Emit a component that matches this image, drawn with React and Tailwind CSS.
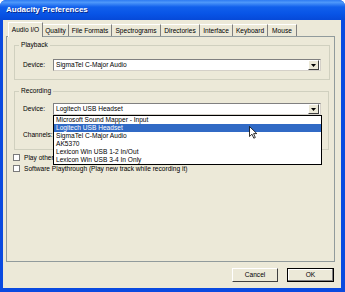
import React from "react";

const tabs = [
  { label: "Quality", w: "w-[26px]" },
  { label: "File Formats", w: "w-[43px]" },
  { label: "Spectrograms", w: "w-[49px]" },
  { label: "Directories", w: "w-[39px]" },
  { label: "Interface", w: "w-[33px]" },
  { label: "Keyboard", w: "w-[35px]" },
  { label: "Mouse", w: "w-[29px]" },
];

const recordingDevices = [
  "Microsoft Sound Mapper - Input",
  "Logitech USB Headset",
  "SigmaTel C-Major Audio",
  "AK5370",
  "Lexicon Win USB 1-2 In/Out",
  "Lexicon Win USB 3-4 In Only",
];

const ComboArrow = () => (
  <div className="flex h-[10px] w-[11px] shrink-0 items-center justify-center border border-t-white border-l-white border-r-[#404040] border-b-[#404040] bg-[#ECE9D8]">
    <svg width="5" height="3" viewBox="0 0 5 3">
      <path d="M0 0 H5 L2.5 3 Z" fill="#000" />
    </svg>
  </div>
);

const Combo = ({ value, children }) => (
  <div className="relative w-[268px]">
    <div className="flex h-[12px] items-center border border-t-[#808080] border-l-[#808080] border-r-[#d4d0c8] border-b-[#d4d0c8] bg-white pr-[1px]">
      <span className="flex-1 truncate pl-[2px] leading-[10px]">{value}</span>
      <ComboArrow />
    </div>
    {children}
  </div>
);

const Checkbox = ({ label }) => (
  <div className="flex h-[11px] items-center gap-[4px]">
    <div className="h-[7px] w-[7px] border border-[#7a7a7a] bg-white" />
    <span className="leading-[8px]">{label}</span>
  </div>
);

const Cursor = () => (
  <svg
    className="absolute left-[195px] top-[10px] z-30"
    width="9"
    height="13"
    viewBox="0 0 9 13"
  >
    <path
      d="M0.5 0.5 V10.5 L3 8.2 L4.8 12.2 L6.3 11.5 L4.6 7.6 H7.8 Z"
      fill="#fff"
      stroke="#000"
      strokeWidth="0.8"
    />
  </svg>
);

export default function App() {
  return (
    <div
      className="flex h-[292px] w-[345px] flex-col overflow-hidden rounded-t-[6px] bg-[#0A4AE0] text-[6.6px] text-black"
      style={{ fontFamily: '"Liberation Sans", Arial, sans-serif' }}
    >
      {/* title bar */}
      <div className="flex h-[20px] shrink-0 items-center bg-[linear-gradient(180deg,#2E7BF2_0%,#4E98FA_12%,#1160EC_35%,#0854E6_70%,#0649D8_100%)] pl-[6px]">
        <span className="text-[8px] font-bold text-white [text-shadow:1px_1px_0_#0A2A8A]">
          Audacity Preferences
        </span>
      </div>

      {/* client area */}
      <div className="mb-[4px] ml-[3px] mr-[4px] flex flex-1 flex-col bg-[#ECE9D8] pt-[2px]">
        {/* tab strip */}
        <div className="ml-[5px] flex h-[14px] items-end">
          <div className="relative z-10 mb-[-1px] flex h-[15px] w-[35px] items-start justify-center border border-b-0 border-t-white border-l-white border-r-[#808080] bg-[#ECE9D8] pt-[3px] leading-[8px]">
            Audio I/O
          </div>
          {tabs.map((t) => (
            <div
              key={t.label}
              className={`flex h-[12px] ${t.w} items-center justify-center border-r border-r-[#808080] border-t border-t-white leading-[8px]`}
            >
              {t.label}
            </div>
          ))}
        </div>

        {/* tab page */}
        <div className="ml-[3px] flex h-[226px] w-[329px] flex-col border border-[#919B9C] pt-[4px]">
          <fieldset className="ml-[7px] w-[316px] border border-[#D0D0BF] pb-[8px] pt-[10px]">
            <legend className="ml-[4px] px-[2px] leading-[8px]">Playback</legend>
            <div className="flex items-center">
              <span className="w-[38px] pl-[8px] leading-[8px]">Device:</span>
              <Combo value="SigmaTel C-Major Audio" />
            </div>
          </fieldset>

          <fieldset className="ml-[7px] mt-[7px] w-[315px] border border-[#D0D0BF] pb-[8px] pt-[8px]">
            <legend className="ml-[4px] px-[2px] leading-[8px]">Recording</legend>
            <div className="flex items-center">
              <span className="w-[38px] pl-[8px] leading-[8px]">Device:</span>
              <Combo value="Logitech USB Headset">
                {/* open drop-down list */}
                <div className="absolute left-0 top-full z-20 w-[269px] border border-black bg-white">
                  {recordingDevices.map((d) => (
                    <div
                      key={d}
                      className={`h-[8px] pl-[2px] text-[6.6px] leading-[8px] ${
                        d === "Logitech USB Headset"
                          ? "bg-[#316AC5] text-white"
                          : ""
                      }`}
                    >
                      {d}
                    </div>
                  ))}
                  <Cursor />
                </div>
              </Combo>
            </div>
            <div className="mt-[14px] flex items-center">
              <span className="w-[38px] pl-[8px] leading-[8px]">Channels:</span>
              <Combo value="2 (Stereo)" />
            </div>
          </fieldset>

          <div className="ml-[6px] mt-[2px] flex flex-col">
            <Checkbox label="Play other tracks while recording new one" />
            <Checkbox label="Software Playthrough (Play new track while recording it)" />
          </div>
        </div>

        {/* buttons */}
        <div className="mr-[7px] mt-[6px] flex justify-end gap-[9px]">
          <button className="flex h-[14px] w-[46px] items-center justify-center border border-t-white border-l-white border-r-[#404040] border-b-[#404040] bg-[#ECE9D8] leading-[8px]">
            Cancel
          </button>
          <button className="flex h-[14px] w-[47px] items-center justify-center border border-black bg-[#ECE9D8] leading-[8px] shadow-[inset_-1px_-1px_0_#808080,inset_1px_1px_0_#fff]">
            OK
          </button>
        </div>
      </div>
    </div>
  );
}
